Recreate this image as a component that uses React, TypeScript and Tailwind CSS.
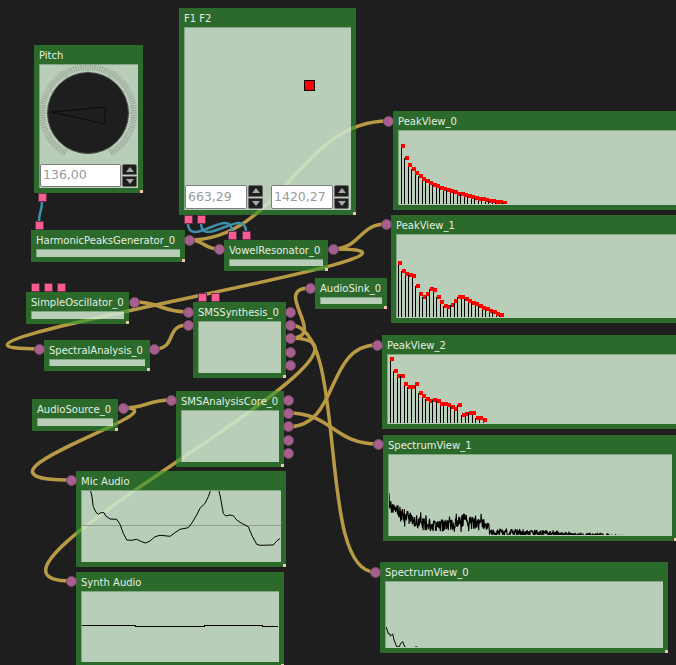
import React from 'react';

const peaks0 = [15.7, 27.7, 35, 38.7, 42.7, 46, 49, 51, 53.3, 54.7, 56, 57.7, 58.7, 60, 61, 61.7, 64, 64, 64.7, 66, 66.7, 68, 68.7, 69, 70, 71, 71, 72, 71.7, 72.7];
const peaks1 = [28.7, 37, 40, 41, 42, 52, 60, 62.7, 60, 55, 56, 62.7, 68, 71.7, 72.7, 70.7, 66.7, 62.7, 62.7, 65, 67, 68.7, 70, 71.7, 73.7, 75, 76.7, 78, 79.7, 80.7];
const peaks2 = [5, 17, 22, 22, 30, 33, 33, 30, 39, 42, 45, 47, 46, 47, 50, 50, 51, 53, 55, 51, 61, 60, 59, 59, 64, 64, 66];

const micWave = '0,-1 9,-1 10.7,5 12.3,16.7 15,22.3 17.3,24.3 19.7,22.7 23,22.7 24.7,26 29,29 35.7,29.3 39,34.3 42.3,43.3 45.7,50 50.7,50.3 55.7,49.3 60.7,51.7 64.7,53 69,51 74,46.7 79,45.3 89,46.3 94,42.7 99,39.3 107.3,37.7 110.7,33.3 115.7,25 119,18.3 124,13.3 127.3,6.7 130,-1 137.3,-1 139,5 142.3,23.3 144.7,26 149,25 152.3,25.7 155.7,30 160.7,33.3 167.3,36.7 170.7,45 175.7,54.3 179,55.3 192.3,55 195.7,51 200.7,47.3';
const synthWave = '0,34.5 54,34.5 54,35.5 123,35.5 123,34.5 181,34.5 181,35.5 200,35.5';
const lowSpectrum = '-0.3,62.3 0.3,44.7 2.3,49 3.3,53 4.3,52.3 5.5,55 7.7,53 9,59 11.7,65.7 14.3,65.7 15.7,62.3 17.7,60.7 19.7,65.7 21.7,67';

// noisy trace for SpectrumView_1, seeded so every render is the same
const anchors = [[0, 50], [10, 57], [20, 64], [35, 70], [50, 72], [65, 72], [75, 66], [85, 69], [100, 72], [105, 78], [160, 80], [220, 81.5], [270, 84]];
function spectrumPoints() {
  let seed = 4711;
  const rand = () => {
    seed = (seed * 16807) % 2147483647;
    return seed / 2147483647 - 0.5;
  };
  const pts: string[] = ['0,50', '1,39'];
  for (let x = 1.5; x < 264; x += 0.4) {
    const i = anchors.findIndex((a) => a[0] > x);
    const [x0, y0] = anchors[i - 1];
    const [x1, y1] = anchors[i];
    const y = y0 + ((y1 - y0) * (x - x0)) / (x1 - x0);
    let amp = x < 104 ? 13 : x < 170 ? 8 : x < 220 ? 4 : 2;
    if (x < 104 && rand() > 0.42) amp = 24;
    pts.push(`${x.toFixed(1)},${(y + rand() * amp).toFixed(1)}`);
  }
  return pts.join(' ');
}

const Node = ({ className, title, children }: { className: string; title: string; children?: React.ReactNode }) => (
  <div className={`absolute flex flex-col px-[5px] pb-[5px] bg-[rgba(50,148,50,0.65)] ${className}`}>
    <div className="h-[19px] shrink-0 text-[10px] leading-[21px] text-[#e6eee2] whitespace-nowrap">{title}</div>
    {children}
    <div className="absolute right-0 bottom-0 w-[3px] h-[3px] bg-[#f2c4ae]" />
  </div>
);

const Panel = ({ className = '', children }: { className?: string; children?: React.ReactNode }) => (
  <div className={`relative flex-1 min-h-0 overflow-hidden bg-white/[.67] border-t border-l border-[#7fa583] ${className}`}>{children}</div>
);

const Bar = () => <div className="h-[8px] bg-white/[.67] border-t border-l border-[#7fa583]" />;

const Port = () => <div className="w-[11px] h-[11px] shrink-0 rounded-full bg-[#a85f8e] border border-[#6f4a66]" />;

const Pin = () => <div className="w-[9px] h-[9px] shrink-0 bg-[#fb5c8e] border border-[#6b3050]" />;

const Plot = ({ children }: { children: React.ReactNode }) => (
  <svg className="absolute left-[-1px] top-[-1px] w-full h-full" fill="none">{children}</svg>
);

const PeakPlot = ({ peaks, x0, step, height }: { peaks: number[]; x0: number; step: number; height: number }) => (
  <Plot>
    {peaks.map((y, i) => {
      const x = x0 + i * step;
      return (
        <g key={i} shapeRendering="crispEdges">
          <line x1={x - 2} x2={x - 2} y1={y} y2={height} stroke="#000" strokeWidth="1" />
          <rect x={x - 2} y={y - 2} width="4" height="4" fill="#f00" />
        </g>
      );
    })}
  </Plot>
);

const Spin = ({ value, className }: { value: string; className: string }) => (
  <div className="flex gap-px">
    <div className={`bg-white border border-[#7d7d7d] rounded-[2px] px-[2px] text-[12.5px] text-[#9a9a9a] flex items-center ${className}`}>{value}</div>
    <div className="w-[15px] flex flex-col gap-px">
      <div className="flex-1 flex items-center justify-center bg-[#1e1e1e] border border-[#6b6b6b] rounded-t-[2px]">
        <svg width="8" height="5"><polygon points="4,0 8,5 0,5" fill="#a8a8a8" /></svg>
      </div>
      <div className="flex-1 flex items-center justify-center bg-[#1e1e1e] border border-[#6b6b6b] rounded-b-[2px]">
        <svg width="8" height="5"><polygon points="0,0 8,0 4,5" fill="#a8a8a8" /></svg>
      </div>
    </div>
  </div>
);

const Dial = () => {
  const ticks = [];
  for (let a = -150; a <= 150; a += 3) {
    const r = (a * Math.PI) / 180;
    const inner = a % 30 === 0 ? 41 : 43;
    ticks.push(
      <line key={a} x1={49 + Math.sin(r) * inner} y1={49 - Math.cos(r) * inner} x2={49 + Math.sin(r) * 49} y2={49 - Math.cos(r) * 49} stroke="#a0aaa0" strokeWidth="1.3" />
    );
  }
  return (
    <svg width="99" height="100" className="shrink-0 ml-[-1px] mt-[-1px]">
      {ticks}
      <circle cx="49" cy="49" r="40.5" fill="#1e1e1e" stroke="#4a4f4a" />
      <polygon points="13,48 66,43 66,60" fill="none" stroke="#0a0a0a" />
    </svg>
  );
};

const wires = [
  'M189 240 C205 240 203 249 219 249',
  'M189 240 C280 240 300 121 388 121',
  'M333 249 C360 249 359 224 386 224',
  'M333 249 C505 249 -140 349 39 349',
  'M134 302 C161 302 161 312 188 312',
  'M154 349 C178 349 164 325 188 325',
  'M290 338 C330 338 270 288 310 288',
  'M290 325 C350 325 315 572 375 572',
  'M290 338 C430 338 -70 581 71 581',
  'M288 413 C333 413 333 444 378 444',
  'M288 427 C340 427 325 345 377 345',
  'M123 408 C147 408 147 400 171 400',
  'M123 408 C190 408 -60 480 71 480',
];

const links = [
  'M42 201 C42 212 39 211 39 222',
  'M188 223 C188 250 232 205 232 232',
  'M201 223 C201 250 246 205 246 232',
];

export default function App() {
  return (
    <div className="relative w-[676px] h-[665px] overflow-hidden bg-[#1e1e1e] font-['DejaVu_Sans',sans-serif]">
      <svg className="absolute inset-0 w-[676px] h-[665px]" fill="none">
        {wires.map((d) => (
          <path key={d} d={d} stroke="#b89a45" strokeWidth="3.5" />
        ))}
        {links.map((d) => (
          <path key={d} d={d} stroke="#3f8fa8" strokeWidth="2.5" />
        ))}
      </svg>

      <Node title="Pitch" className="left-[34px] top-[45px] w-[109px] h-[148px]">
        <Panel className="flex flex-col">
          <Dial />
          <Spin value="136,00" className="w-[81px] h-[23px]" />
        </Panel>
        <div className="absolute left-[4px] top-[148px] flex"><Pin /></div>
      </Node>

      <Node title="F1 F2" className="left-[179px] top-[8px] w-[177px] h-[207px]">
        <Panel className="flex flex-col justify-end pb-[1px]">
          <div className="absolute left-[119px] top-[52px] w-[11px] h-[11px] bg-[#f00] border border-black" />
          <div className="flex gap-[8px]">
            <Spin value="663,29" className="w-[62px] h-[24px]" />
            <Spin value="1420,27" className="w-[62px] h-[24px]" />
          </div>
        </Panel>
        <div className="absolute left-[5px] top-[207px] flex gap-[4px]"><Pin /><Pin /></div>
      </Node>

      <Node title="HarmonicPeaksGenerator_0" className="left-[31px] top-[230px] w-[154px] h-[32px]">
        <Bar />
        <div className="absolute left-[4px] top-[-9px] flex"><Pin /></div>
        <div className="absolute right-[-9.5px] top-[4.5px]"><Port /></div>
      </Node>

      <Node title="VowelResonator_0" className="left-[224px] top-[240px] w-[104px] h-[31px]">
        <Bar />
        <div className="absolute left-[4px] top-[-9px] flex gap-[5px]"><Pin /><Pin /></div>
        <div className="absolute left-[-10.5px] top-[3.5px]"><Port /></div>
        <div className="absolute right-[-10.5px] top-[3.5px]"><Port /></div>
      </Node>

      <Node title="AudioSink_0" className="left-[315px] top-[278px] w-[72px] h-[31px]">
        <Bar />
        <div className="absolute left-[-10.5px] top-[4.5px]"><Port /></div>
      </Node>

      <Node title="SimpleOscillator_0" className="left-[26px] top-[292px] w-[103px] h-[32px]">
        <Bar />
        <div className="absolute left-[5px] top-[-9px] flex gap-[4px]"><Pin /><Pin /><Pin /></div>
        <div className="absolute right-[-10.5px] top-[4.5px]"><Port /></div>
      </Node>

      <Node title="SpectralAnalysis_0" className="left-[44px] top-[340px] w-[106px] h-[31px]">
        <Bar />
        <div className="absolute left-[-10.5px] top-[3.5px]"><Port /></div>
        <div className="absolute right-[-9.5px] top-[3.5px]"><Port /></div>
      </Node>

      <Node title="SMSSynthesis_0" className="left-[193px] top-[302px] w-[93px] h-[76px]">
        <Panel />
        <div className="absolute left-[5px] top-[-9px] flex gap-[4px]"><Pin /><Pin /></div>
        <div className="absolute left-[-10.5px] top-[4.5px] flex flex-col gap-[2px]"><Port /><Port /></div>
        <div className="absolute right-[-9.5px] top-[4.5px] flex flex-col gap-[2.4px]"><Port /><Port /><Port /><Port /><Port /></div>
      </Node>

      <Node title="AudioSource_0" className="left-[32px] top-[399px] w-[86px] h-[32px]">
        <Bar />
        <div className="absolute right-[-10.5px] top-[3.5px]"><Port /></div>
      </Node>

      <Node title="SMSAnalysisCore_0" className="left-[176px] top-[391px] w-[108px] h-[76px]">
        <Panel />
        <div className="absolute left-[-10.5px] top-[3.5px]"><Port /></div>
        <div className="absolute right-[-9.5px] top-[3.5px] flex flex-col gap-[2.4px]"><Port /><Port /><Port /><Port /><Port /></div>
      </Node>

      <Node title="Mic Audio" className="left-[76px] top-[471px] w-[210px] h-[96px]">
        <Panel>
          <div className="absolute left-0 right-0 top-[34px] h-px bg-[#929b92]" />
          <Plot>
            <polyline points={micWave} stroke="#000" strokeWidth="1" />
          </Plot>
        </Panel>
        <div className="absolute left-[-10.5px] top-[3.5px]"><Port /></div>
      </Node>

      <Node title="Synth Audio" className="left-[76px] top-[572px] w-[208px] h-[95px]">
        <Panel>
          <Plot>
            <polyline points={synthWave} stroke="#000" strokeWidth="1" shapeRendering="crispEdges" />
          </Plot>
        </Panel>
        <div className="absolute left-[-10.5px] top-[3.5px]"><Port /></div>
      </Node>

      <Node title="PeakView_0" className="left-[393px] top-[111px] w-[293px] h-[99px]">
        <Panel><PeakPlot peaks={peaks0} x0={5} step={3.517} height={75} /></Panel>
        <div className="absolute left-[-10.5px] top-[4.5px]"><Port /></div>
      </Node>

      <Node title="PeakView_1" className="left-[391px] top-[215px] w-[293px] h-[108px]">
        <Panel><PeakPlot peaks={peaks1} x0={4} step={3.517} height={84} /></Panel>
        <div className="absolute left-[-10.5px] top-[3.5px]"><Port /></div>
      </Node>

      <Node title="PeakView_2" className="left-[382px] top-[335px] w-[302px] h-[94px]">
        <Panel><PeakPlot peaks={peaks2} x0={5} step={3.577} height={70} /></Panel>
        <div className="absolute left-[-10.5px] top-[4.5px]"><Port /></div>
      </Node>

      <Node title="SpectrumView_1" className="left-[383px] top-[435px] w-[294px] h-[106px]">
        <Panel>
          <Plot>
            <polyline points={spectrumPoints()} stroke="#000" strokeWidth="1.1" />
          </Plot>
        </Panel>
        <div className="absolute left-[-10.5px] top-[3.5px]"><Port /></div>
      </Node>

      <Node title="SpectrumView_0" className="left-[380px] top-[562px] w-[288px] h-[91px]">
        <Panel>
          <Plot>
            <polyline points={lowSpectrum} stroke="#000" strokeWidth="1" />
            <polyline points="29,67 31,65.7 34.3,67" stroke="#000" strokeWidth="1" />
          </Plot>
        </Panel>
        <div className="absolute left-[-10.5px] top-[4.5px]"><Port /></div>
      </Node>
    </div>
  );
}
